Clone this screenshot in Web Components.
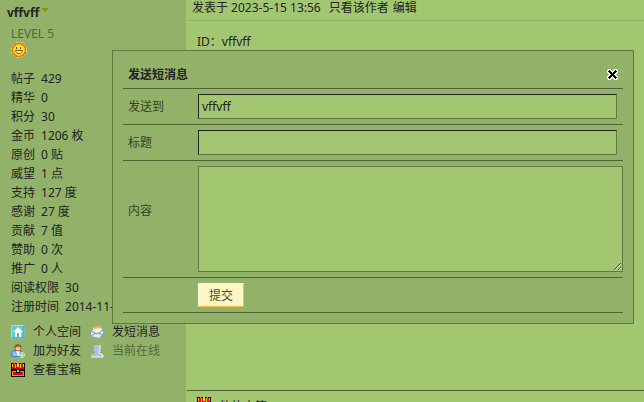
<!DOCTYPE html>
<html lang="zh-CN">
<head>
<meta charset="utf-8">
<title>发送短消息</title>
<style>
    body {
        --panel: #93b269;
        --paper: #a3c671;
        --line: #4f6333;
        --edge: #607a43;
        --ink: #222;
        --dim: #50693a;
        margin: 0;
        background: var(--paper);
        color: var(--ink);
        font: 12px/19px "Noto Sans", "Noto Sans CJK SC", sans-serif;
    }
</style>
</head>
<body>
<forum-page>
    <user-panel slot="side" name="vffvff" level="LEVEL 5"></user-panel>
    <forum-post date="发表于 2023-5-15 13:56">ID：vffvff</forum-post>
    <message-dialog slot="dialog" to="vffvff"></message-dialog>
</forum-page>

<script>
const icons = {
    home: `<rect x=".5" y=".5" width="13" height="13" rx="1" fill="#61c9d3" stroke="#a0e4dd"/>
        <path d="M1 13h12V1" fill="none" stroke="#419bb0"/>
        <path d="M7 2 2 7h2v5h6V7h2z" fill="#fff"/><path d="M6 8h2v4H6z" fill="#79b263"/>`,
    friend: `<path d="M0 12c0-4 1-6 4-6h4c3 0 4 2 4 6l-2 1H2z" fill="#3f7fdc"/>
        <path d="M1 11c0-3 1-4 3-4l2 5H2z" fill="#8fc0f7"/>
        <path d="M5 7l1 5h2l1-5z" fill="#e8f4ff"/>
        <circle cx="7" cy="4" r="3" fill="#f5c08a" stroke="#b5672f"/>
        <path d="M3 4c0-5 8-5 8 0C9 2 6 2 3 4z" fill="#9c4d20"/>
        <circle cx="11" cy="11" r="2.5" fill="#4d9141" stroke="#d5edc8"/>
        <path d="M11 9v4M9 11h4" stroke="#fff"/>`,
    chest: `<path d="M0 0h3v1h1V0h2v1h2V0h2v1h1V0h3v14H0z" fill="#000"/>
        <path d="M1 1h12v5H1z" fill="#e00b0b"/>
        <path d="M1 1h1v3H1zM12 1h1v3h-1zM4 1h1v4H4zM9 1h1v4H9z" fill="#ffc514"/>
        <path d="M6 1h2v3H6z" fill="#ffe44a"/>
        <path d="M2 5h10v1H2z" fill="#a00"/>
        <path d="M1 8h12v5H1z" fill="#f98a12"/>
        <path d="M2 9h10v3H2z" fill="#d80b0b"/>
        <path d="M5 7h4v3H5z" fill="#000"/>
        <path d="M6 7h2v2H6z" fill="#ffc514"/>`,
    mail: `<path d="M1 6 6 1l6 2 1 6-4 4-8-2z" fill="#c2d5f5" stroke="#7f98cf"/>
        <path d="M3 3l6-2 3 3-2 4-6-1z" fill="#fff4d4"/><path d="M3 2l6-1 3 2-8 1z" fill="#eeb45b"/>
        <path d="M1 6l6 3 6-4v4l-4 4-8-2z" fill="#dce9fb"/>
        <path d="M1 6l6 3 6-4M1 11l5-3M13 10 8 8" fill="none" stroke="#7895ce"/>`,
    online: `<path d="M4 1h6v6l-1 1v1l4 2v2H1v-2l4-2V8L4 7z" fill="#a9c3e2"/>
        <path d="M10 1v6l-1 1v1l4 2v2H1" fill="none" stroke="#f1f7fc"/>`,
    smile: `<circle cx="8" cy="8" r="7.5" fill="none" stroke="#ffe6a0" stroke-dasharray="2 2"/>
        <circle cx="8" cy="8" r="6.5" fill="#ffe61e" stroke="#f0720b" stroke-width="1.5"/>
        <path d="M5 5h1v2H5zM9 5h1v2H9z" fill="#5b3200"/>
        <path d="M4.500 8.500h7c0 4-7 4-7 0z" fill="#fff" stroke="#8a4a00"/>`
};

function icon(name, size = 14) {
    return `<svg width="${size}" height="${size}" viewBox="0 0 ${size} ${size}" aria-hidden="true"${name === 'chest' ? ' shape-rendering="crispEdges"' : ''}>${icons[name]}</svg>`;
}

// Page frame: side panel, post column, dialog on top
class ForumPage extends HTMLElement {
    constructor() {
        super();
        this.attachShadow({ mode: 'open' }).innerHTML = `
            <style>
                :host {
                    display: grid;
                    grid-template-columns: 186px minmax(0, 1fr);
                    position: relative;
                    height: 100vh;
                    overflow: hidden;
                }
                .side { background: var(--panel); }
                ::slotted([slot=dialog]) {
                    position: absolute;
                    top: 50px;
                    left: 112px;
                    right: 10px;
                }
            </style>
            <div class="side"><slot name="side"></slot></div>
            <slot></slot>
            <slot name="dialog"></slot>
        `;
    }
}

class UserPanel extends HTMLElement {
    constructor() {
        super();
        const stats = [
            ['帖子', '429'], ['精华', '0'], ['积分', '30'], ['金币', '1206 枚'],
            ['原创', '0 贴'], ['威望', '1 点'], ['支持', '127 度'], ['感谢', '27 度'],
            ['贡献', '7 值'], ['赞助', '0 次'], ['推广', '0 人'],
            ['阅读权限', '30'], ['注册时间', '2014-11-']
        ];
        this.attachShadow({ mode: 'open' }).innerHTML = `
            <style>
                :host { display: block; padding: 3px 7px; }
                a { color: inherit; text-decoration: none; }
                svg { display: block; }
                .name { display: flex; gap: 2px; font-weight: bold; }
                .name::after {
                    content: "";
                    height: 0;
                    margin-top: 5px;
                    border: 4px solid transparent;
                    border-top-color: #869800;
                    border-bottom: 0;
                }
                .body { padding: 2px 4px; }
                .level { color: var(--dim); margin: 0; }
                .face { margin-top: -1px; }
                dl { margin: 11px 0 6px; }
                dl div { display: flex; gap: 6px; white-space: nowrap; }
                dd { margin: 0; }
                ul {
                    display: grid;
                    grid-template-columns: 79px 1fr;
                    list-style: none;
                    margin: 0;
                    padding: 0;
                }
                li { display: flex; align-items: center; gap: 8px; white-space: nowrap; }
                .off { color: var(--dim); }
            </style>
            <a class="name" href="#user">${this.getAttribute('name')}</a>
            <div class="body">
                <p class="level">${this.getAttribute('level')}</p>
                <div class="face">${icon('smile', 16)}</div>
                <dl>${stats.map(([k, v]) => `<div><dt>${k}</dt><dd>${v}</dd></div>`).join('')}</dl>
                <ul>
                    <li>${icon('home')}<a href="#space">个人空间</a></li>
                    <li>${icon('mail')}<a href="#pm">发短消息</a></li>
                    <li>${icon('friend')}<a href="#friend">加为好友</a></li>
                    <li class="off">${icon('online')}<span>当前在线</span></li>
                    <li>${icon('chest')}<a href="#chest">查看宝箱</a></li>
                </ul>
            </div>
        `;
    }
}

class ForumPost extends HTMLElement {
    constructor() {
        super();
        this.attachShadow({ mode: 'open' }).innerHTML = `
            <style>
                :host { display: flex; flex-direction: column; padding-left: 1px; min-width: 0; }
                a { color: inherit; text-decoration: none; }
                header {
                    display: flex;
                    gap: 4px;
                    padding: 0 5px 4px;
                    border-bottom: 1px solid var(--panel);
                    line-height: 16px;
                }
                header span { margin-right: 4px; }
                .text { height: 348px; padding: 11px 10px 10px; }
                footer {
                    display: flex;
                    align-items: flex-start;
                    gap: 8px;
                    border-top: 1px solid var(--line);
                    padding: 6px 10px;
                }
            </style>
            <header>
                <span>${this.getAttribute('date')}</span>
                <a href="#author">只看该作者</a>
                <a href="#edit">编辑</a>
            </header>
            <div class="text"><slot></slot></div>
            <footer>${icon('chest')}<a href="#chest">他的宝箱</a></footer>
        `;
    }
}

class MessageDialog extends HTMLElement {
    constructor() {
        super();
        this.attachShadow({ mode: 'open' }).innerHTML = `
            <style>
                :host {
                    display: block;
                    padding: 10px;
                    background: var(--panel);
                    border: 1px solid var(--edge);
                }
                header {
                    display: flex;
                    justify-content: space-between;
                    align-items: center;
                    padding: 4px 5px;
                    border-bottom: 1px solid var(--line);
                }
                h1 { margin: 0; font-size: 12px; }
                form { margin: 0; }
                .row {
                    display: grid;
                    grid-template-columns: 70px minmax(0, 1fr);
                    align-items: center;
                    padding: 5px 0 5px 5px;
                    border-bottom: 1px solid var(--line);
                }
                label { color: #34421f; }
                .tall label { padding-bottom: 18px; }
                input, textarea, .send {
                    box-sizing: border-box;
                    margin: 0;
                    font: inherit;
                    color: inherit;
                }
                input, textarea {
                    display: block;
                    background: var(--paper);
                    border: 1px solid var(--edge);
                    border-radius: 0;
                    outline: 0;
                    padding: 2px 3px;
                }
                input {
                    height: 25px;
                    margin-right: 6px;
                    border-top-color: #222;
                    border-left-color: #222;
                }
                textarea { width: 100%; height: 106px; }
                .send {
                    grid-column: 2;
                    justify-self: start;
                    height: 24px;
                    padding: 0 10px;
                    background: #fff6c5;
                    border: 1px solid;
                    border-color: #fffdee #fdb939 #fdb939 #fffdee;
                    color: #40512b;
                }
                .close { padding: 0; border: 0; background: none; }
                svg { display: block; }
            </style>
            <header>
                <h1>发送短消息</h1>
                <button class="close" type="button" aria-label="关闭">
                    <svg width="11" height="11" viewBox="0 0 11 11" shape-rendering="crispEdges">
                        <path d="M1 0h3v1h1v1h1V1h1V0h3v1h1v3h-1v1H9v1h1v1h1v3h-1v1H7v-1H6V9H5v1H4v1H1v-1H0V7h1V6h1V5H1V4H0V1h1z" fill="#fff"/>
                        <path d="M2 1h1v1h1v1h1v1h1V3h1V2h1V1h1v1h1v1H9v1H8v1H7v1h1v1h1v1h1v1H9v1H8V9H7V8H6V7H5v1H4v1H3v1H2V9H1V8h1V7h1V6h1V5H3V4H2V3H1V2h1z"/>
                    </svg>
                </button>
            </header>
            <form>
                <div class="row">
                    <label for="to">发送到</label>
                    <input id="to" type="text" value="${this.getAttribute('to')}">
                </div>
                <div class="row">
                    <label for="subject">标题</label>
                    <input id="subject" type="text">
                </div>
                <div class="row tall">
                    <label for="message">内容</label>
                    <textarea id="message"></textarea>
                </div>
                <div class="row">
                    <button class="send" type="button">提交</button>
                </div>
            </form>
        `;
    }
}

customElements.define('forum-page', ForumPage);
customElements.define('user-panel', UserPanel);
customElements.define('forum-post', ForumPost);
customElements.define('message-dialog', MessageDialog);
</script>
</body>
</html>
